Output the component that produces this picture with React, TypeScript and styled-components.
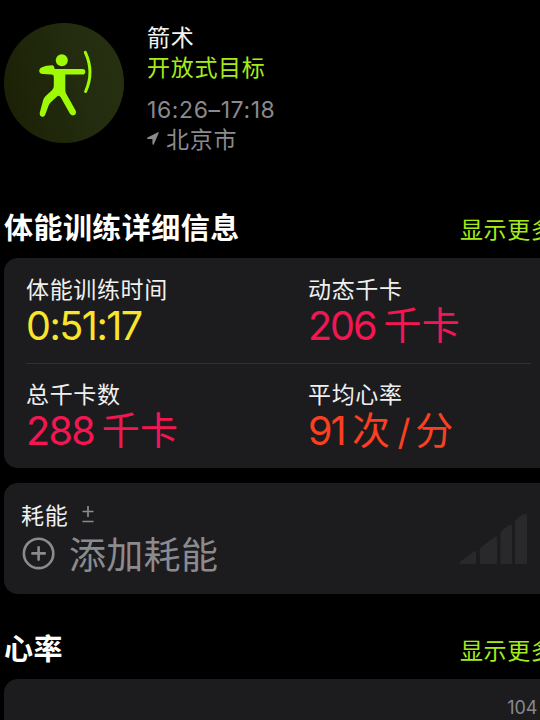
import React from 'react';
import styled, { createGlobalStyle } from 'styled-components';

const GlobalStyle = createGlobalStyle`
  html, body { margin: 0; background: #000; overflow: hidden; }
  * { box-sizing: border-box; }
`;

const cjk = '"Noto Sans CJK SC", sans-serif';
const latin = 'Inter, "Noto Sans CJK SC", sans-serif';

const Screen = styled.main`
  width: 540px;
  height: 720px;
  overflow: hidden;
  background: #000;
  color: #fff;
  font-family: ${cjk};
  white-space: nowrap;
`;

const Header = styled.header`
  display: flex;
  gap: 23px;
  height: 203px;
  padding: 22px 0 0 4px;
`;

const Badge = styled.div`
  width: 120px;
  height: 120px;
  margin-top: 1px;
  border-radius: 50%;
  background: linear-gradient(75deg, #1a1f04, #232c0f 60%, #27310f);
`;

const Summary = styled.div`
  display: flex;
  flex-direction: column;
`;

const Line = styled.div<{ $color?: string }>`
  display: flex;
  align-items: center;
  height: 29.4px;
  font-size: 23px;
  line-height: 29px;
  letter-spacing: 0.7px;
  color: ${(p) => p.$color ?? '#f2f2f2'};
`;

const TimeRange = styled(Line)`
  height: 27px;
  margin-top: 16.4px;
  font-family: ${latin};
  letter-spacing: 0.6px;
`;

const Place = styled(Line)`
  gap: 7px;
`;

const SectionHead = styled.div`
  display: flex;
  height: 55px;
  padding: 4px 0 0 4px;
`;

const Title = styled.h2`
  width: 456px;
  flex: none;
  margin: 0;
  font-size: 29px;
  font-weight: 700;
  line-height: 38px;
  letter-spacing: 0.45px;
`;

const More = styled.span`
  flex: none;
  padding-top: 2px;
  font-size: 23px;
  line-height: 38px;
  letter-spacing: 0.6px;
  color: #a4ec18;
`;

const Card = styled.section<{ $height: number; $gap?: number }>`
  width: 560px;
  height: ${(p) => p.$height}px;
  margin: 0 0 ${(p) => p.$gap ?? 0}px 3.5px;
  border-radius: 14px;
  background: #1c1c1e;
`;

const StatRow = styled.div`
  display: grid;
  grid-template-columns: 282px 223px;
  width: 505px;
  height: 105px;
  margin-left: 22.5px;
  padding-top: 15px;
  & + & {
    border-top: 1px solid #303032;
    padding-top: 14px;
  }
`;

const Label = styled.div`
  font-size: 23px;
  line-height: 30px;
  letter-spacing: 0.65px;
  color: #f0f0f0;
`;

const Value = styled.div<{ $color: string }>`
  display: flex;
  height: 44px;
  color: ${(p) => p.$color};
  line-height: 44px;
`;

const Digits = styled.span<{ $spacing: number }>`
  padding-top: 1px;
  font-family: ${latin};
  font-size: 39.5px;
  font-weight: 400;
  letter-spacing: ${(p) => p.$spacing}px;
`;

const Unit = styled.span<{ $gap: number }>`
  margin-left: ${(p) => p.$gap}px;
  font-size: 38px;
  line-height: 40px;
  letter-spacing: 0.3px;
`;

const Slash = styled.span`
  margin: 0 5px 0 7px;
  padding-top: 2px;
  font-family: ${latin};
  font-size: 36px;
`;

const EffortBody = styled.div`
  display: flex;
  justify-content: space-between;
  width: 524px;
  padding: 16px 0 0 17.5px;
`;

const EffortLabel = styled(Label)`
  display: flex;
  align-items: center;
  gap: 13.5px;
`;

const AddEffort = styled.div`
  display: flex;
  align-items: center;
  gap: 13px;
  height: 48px;
  font-size: 37px;
  line-height: 48px;
  letter-spacing: 0.3px;
  color: #8b8b8f;
`;

const BarsIcon = styled.svg`
  margin-top: 13px;
`;

const ChartBody = styled.div`
  width: 534px;
  padding-top: 18px;
  text-align: right;
  font-family: ${latin};
  font-size: 18px;
  line-height: 22px;
  color: #89898e;
`;

const stats = [
  [
    { label: '体能训练时间', digits: '0:51:17', units: [], color: '#fbe52c', spacing: -1.5, gap: 0 },
    { label: '动态千卡', digits: '206', units: ['千卡'], color: '#f41653', spacing: -2, gap: 8 },
  ],
  [
    { label: '总千卡数', digits: '288', units: ['千卡'], color: '#f41653', spacing: -1.6, gap: 7.5 },
    { label: '平均心率', digits: '91', units: ['次', '分'], color: '#fa4021', spacing: -2, gap: 7.5 },
  ],
];

const Archer = () => (
  <svg width="120" height="120" viewBox="0 0 120 120" fill="none" stroke="#9efa05" strokeLinecap="round" strokeLinejoin="round">
    <circle cx="57.8" cy="37.2" r="6" fill="#9efa05" stroke="none" />
    <path d="M37 44.8C41 43 45 42.3 48 42.3Q50.3 42.5 50.7 46H78.5a2.8 2.8 0 0 1 0 5.6H61.3V66.5C61.3 69 62 70.5 63.2 72.5L71.6 87.5C73.5 92 68.3 94.3 65.8 90.5L57 74.8Q55 71.5 52.8 73.8L46.5 79.5Q45.2 80.8 44.6 82.5L41.4 91.3C39.8 95.8 34.8 93.8 35.8 89.5L39.2 77Q39.8 75 41.2 73.5L48.2 67Q49.8 65.5 49.8 63V54Q49.8 51.6 47.5 51.6L39 51C34.5 50.8 34.3 46.8 37 44.8Z" fill="#9efa05" stroke="none" />
    <path d="M81.3 29.4Q90.5 49 81.6 68.5" strokeWidth="3" />
  </svg>
);

const LocationArrow = () => (
  <svg width="12" height="13" viewBox="0 0 12 13" fill="#8a8a8e">
    <path d="M11.8.7 6.9 12.2C6.5 13 5.4 12.8 5.4 12V7.1H.9C-.1 7.1-.3 6 .5 5.6L11 .2Q11.9-.1 11.8.7Z" />
  </svg>
);

const PlusMinus = () => (
  <svg width="12" height="18" viewBox="0 0 12 18" stroke="#8a8a8e" strokeWidth="1.7">
    <path d="M.5 6.5H11.5M6 1V12M.5 16.5H11.5" />
  </svg>
);

const AddIcon = () => (
  <svg width="35" height="34" viewBox="0 0 35 34" fill="none" stroke="#8b8b8f" strokeWidth="2.6" strokeLinecap="round">
    <circle cx="17.6" cy="17.4" r="14.7" />
    <path d="M11.4 17.4H23.8M17.6 11.2V23.6" />
  </svg>
);

const EffortBars = () => (
  <BarsIcon width="69" height="53" viewBox="0 0 69 53" fill="#29292b">
    <path d="M2 49 15 39.6Q17 38.3 17 40.5V50.5Q17 52 15.5 52H2C0 52 0 50.3 2 49Z" />
    <path d="M22 35.5 35.5 25Q38 23.4 38 26V50.5Q38 52 36.5 52H22.5Q21 52 21 50.5V37.5Q21 36.3 22 35.5Z" />
    <path d="M42.5 19 48.5 14Q53 11 53 15V50.5Q53 52 51.5 52H43Q41.5 52 41.5 50.5V21Q41.5 20 42.5 19Z" />
    <path d="M57 8 62 3.5Q68 0 68 4V50.5Q68 52 66.5 52H57.5Q56 52 56 50.5V10Q56 9 57 8Z" />
  </BarsIcon>
);

export default function App() {
  return (
    <>
      <GlobalStyle />
      <Screen>
        <Header>
          <Badge><Archer /></Badge>
          <Summary>
            <Line>箭术</Line>
            <Line $color="#a4ec18">开放式目标</Line>
            <TimeRange $color="#8a8a8e">16:26–17:18</TimeRange>
            <Place $color="#8a8a8e"><LocationArrow />北京市</Place>
          </Summary>
        </Header>

        <SectionHead>
          <Title>体能训练详细信息</Title>
          <More>显示更多</More>
        </SectionHead>
        <Card $height={210} $gap={14.5}>
          {stats.map((row, i) => (
            <StatRow key={i}>
              {row.map((s) => (
                <div key={s.label}>
                  <Label>{s.label}</Label>
                  <Value $color={s.color}>
                    <Digits $spacing={s.spacing}>{s.digits}</Digits>
                    {s.units.map((unit, n) => (
                      <React.Fragment key={unit}>
                        {n > 0 && <Slash>/</Slash>}
                        <Unit $gap={n === 0 ? s.gap : 0}>{unit}</Unit>
                      </React.Fragment>
                    ))}
                  </Value>
                </div>
              ))}
            </StatRow>
          ))}
        </Card>

        <Card $height={111.5} $gap={30}>
          <EffortBody>
            <div>
              <EffortLabel>耗能<PlusMinus /></EffortLabel>
              <AddEffort><AddIcon />添加耗能</AddEffort>
            </div>
            <EffortBars />
          </EffortBody>
        </Card>

        <SectionHead>
          <Title>心率</Title>
          <More>显示更多</More>
        </SectionHead>
        <Card $height={80}>
          <ChartBody>104</ChartBody>
        </Card>
      </Screen>
    </>
  );
}
